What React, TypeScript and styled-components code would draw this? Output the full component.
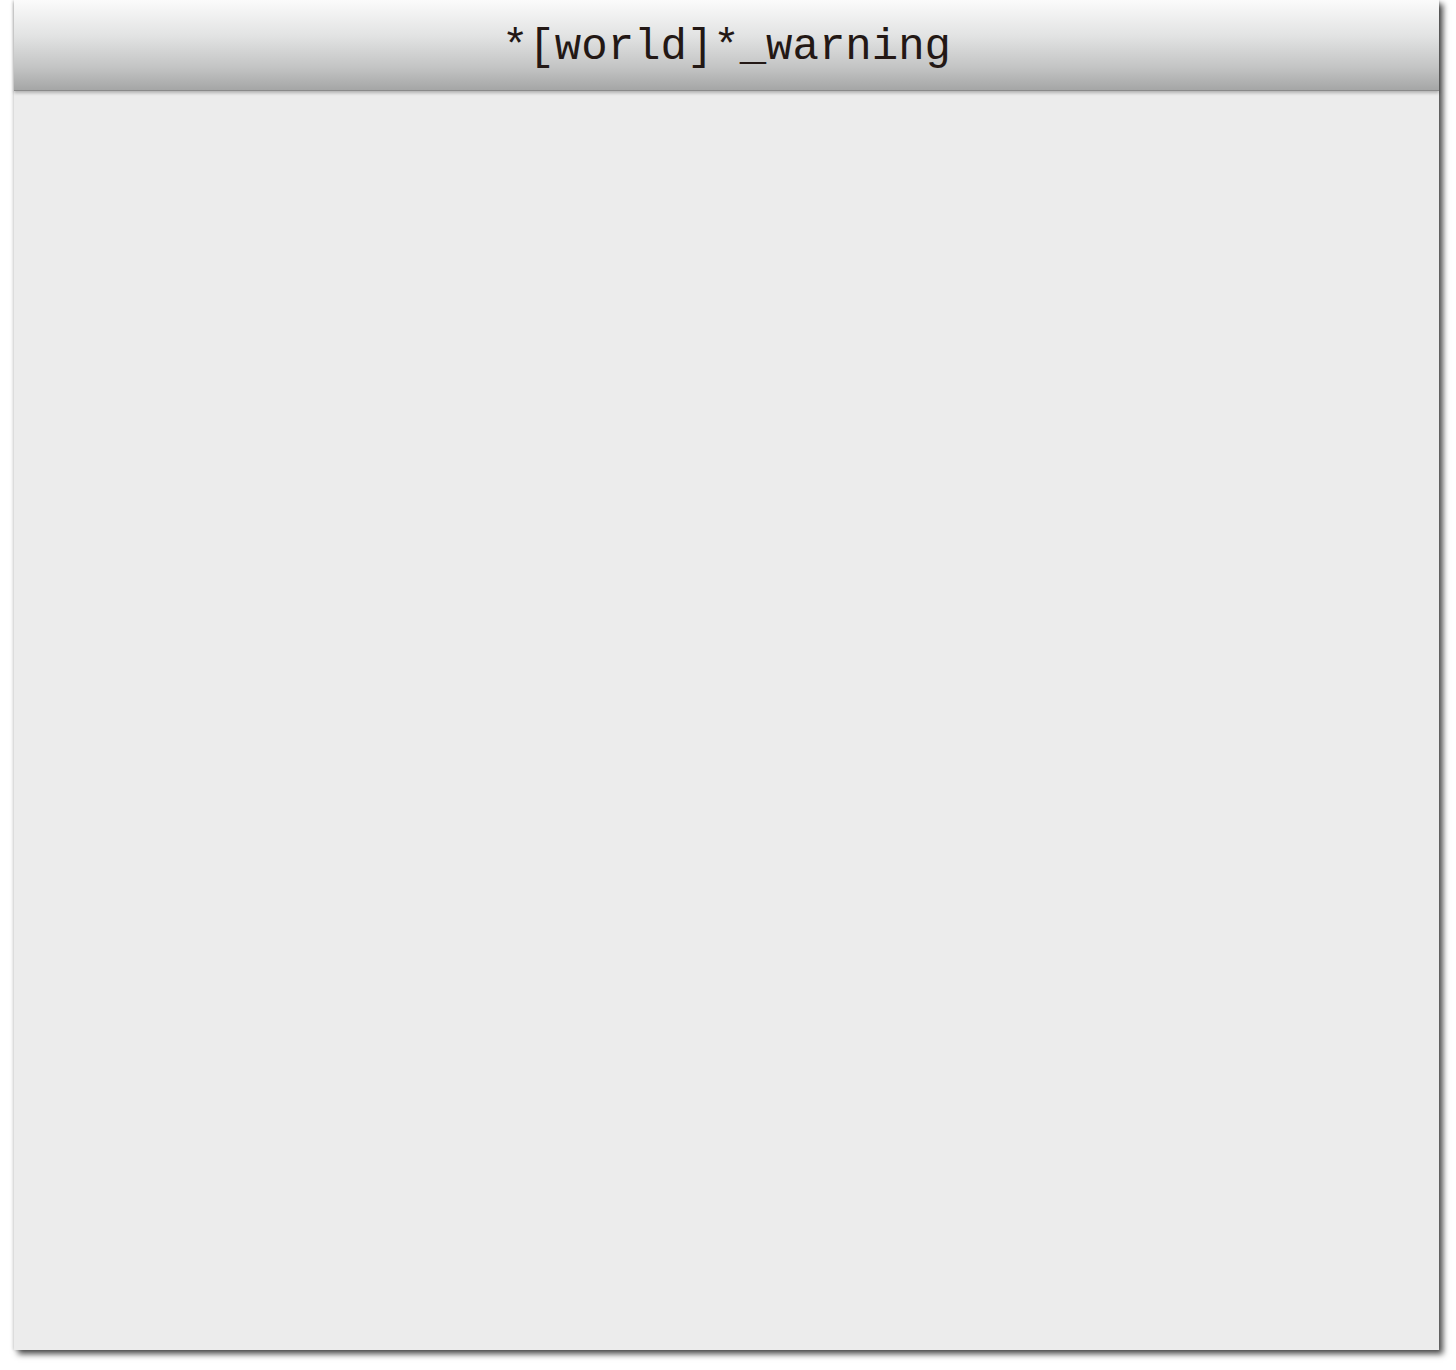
import React from 'react'
import styled, { createGlobalStyle } from 'styled-components'

const GlobalStyle = createGlobalStyle`
    html, body {
        margin: 0;
        padding: 0;
        background: #ffffff;
    }
`

const Page = styled.div`
    padding: 0 17px 20px 14px;
`

const Panel = styled.div`
    height: 1350px;
    background: #ececec;
    display: flex;
    flex-direction: column;
    box-shadow: 4px 4px 6px rgba(0, 0, 0, 0.7), -1px 0 3px rgba(0, 0, 0, 0.15);
`

const Header = styled.div`
    height: 90px;
    flex-shrink: 0;
    display: flex;
    align-items: center;
    justify-content: center;
    background: linear-gradient(to bottom, #fbfbfb 0%, #e2e3e3 40%, #c3c4c4 75%, #a5a6a6 100%);
    border-bottom: 1px solid #8a8a8a;
    box-shadow: 0 2px 3px rgba(0, 0, 0, 0.25);
    position: relative;
    z-index: 1;
`

const Title = styled.h1`
    margin: 4px 0 0 0;
    font-family: 'Liberation Mono', 'DejaVu Sans Mono', monospace;
    font-size: 44px;
    font-weight: 400;
    color: #231815;
    letter-spacing: 0;
`

const Body = styled.div`
    flex: 1;
`

function App() {
    return (
        <>
            <GlobalStyle />
            <Page>
                <Panel>
                    <Header>
                        <Title>*[world]*_warning</Title>
                    </Header>
                    <Body />
                </Panel>
            </Page>
        </>
    )
}

export default App
